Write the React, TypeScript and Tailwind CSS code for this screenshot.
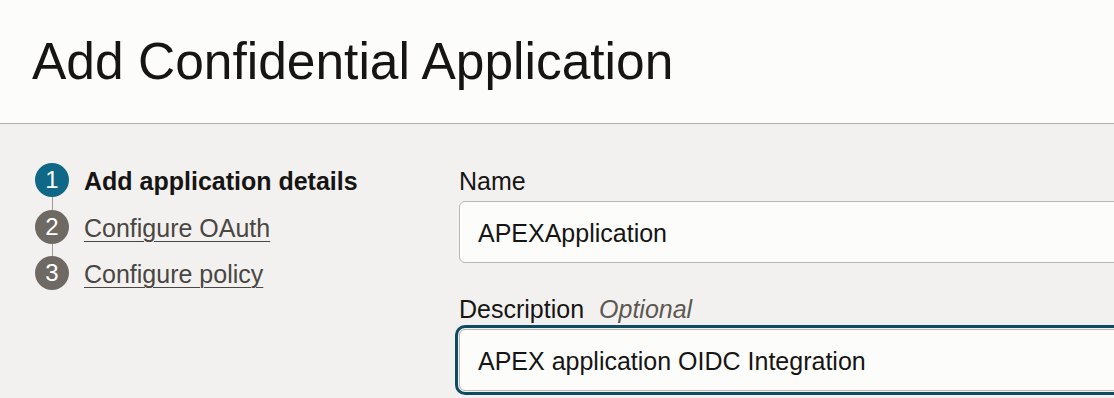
const steps = [
  { n: 1, label: 'Add application details', active: true },
  { n: 2, label: 'Configure OAuth', active: false },
  { n: 3, label: 'Configure policy', active: false },
];

function StepList() {
  return (
    <div className="grid grid-cols-[34px_1fr] gap-x-[15px]">
      {steps.map((s, i) => (
        <div key={s.n} className="contents">
          <div
            className={`flex h-[34px] w-[34px] items-center justify-center rounded-full text-[24px] leading-none text-white ${
              s.active ? 'bg-[#0f6885]' : 'bg-[#6f6964]'
            }`}
          >
            {s.n}
          </div>
          <div className="flex h-[34px] items-center pt-[2px]">
            {s.active ? (
              <span className="text-[25px] font-bold leading-[30px] text-[#161513]">{s.label}</span>
            ) : (
              <a className="text-[25px] leading-[30px] text-[#4a4642] underline decoration-1 underline-offset-[4px]">
                {s.label}
              </a>
            )}
          </div>
          {i < steps.length - 1 && (
            <>
              <div className="flex h-[12.5px] justify-center">
                <div className="h-full w-px bg-[#a29c96]" />
              </div>
              <div />
            </>
          )}
        </div>
      ))}
    </div>
  );
}

function Field({ label, optional, value, focused }: { label: string; optional?: boolean; value: string; focused?: boolean }) {
  return (
    <div className="flex flex-col">
      <div className="flex items-center gap-[15px] text-[25px] leading-[30px] text-[#161513]">
        <span>{label}</span>
        {optional && <span className="italic text-[#5c5853]">Optional</span>}
      </div>
      <div
        className={`mt-[5px] flex h-[62px] w-[700px] items-center rounded-[6px] border border-[#bab6b1] bg-[#fcfcfb] pl-[18px] pt-[4px] text-[25px] text-[#161513] ${
          focused ? 'outline-3 outline-offset-1 outline-[#0d4b62]' : ''
        }`}
      >
        {value}
      </div>
    </div>
  );
}

export default function App() {
  return (
    <div className="h-[398px] w-full overflow-hidden bg-[#f2f1ef] font-['Liberation_Sans',Arial,sans-serif]">
      {/* Header */}
      <header className="flex h-[124px] items-center border-b border-[#b3b1ae] bg-[#fcfcfb] pl-[32px]">
        <h1 className="text-[51.5px] leading-none font-normal text-[#161513]">Add Confidential Application</h1>
      </header>

      <div className="flex">
        {/* Train / steps */}
        <div className="w-[459px] shrink-0 pl-[35px] pt-[39px]">
          <StepList />
        </div>

        {/* Form */}
        <div className="flex flex-col gap-[31px] pt-[42px]">
          <Field label="Name" value="APEXApplication" />
          <Field label="Description" optional value="APEX application OIDC Integration" focused />
        </div>
      </div>
    </div>
  );
}
